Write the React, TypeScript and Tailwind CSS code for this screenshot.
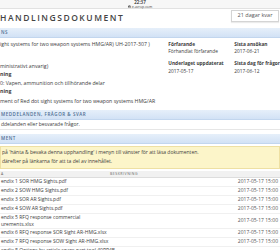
import { Lock } from 'lucide-react'

const files = [
  { name: ['endix 1 SOR HMG Sights.pdf'], date: '2017-05-17 15:00' },
  { name: ['endix 2 SOW HMG Sights.pdf'], date: '2017-05-17 15:00' },
  { name: ['endix 3 SOR AR Sights.pdf'], date: '2017-05-17 15:00' },
  { name: ['endix 4 SOW AR Sights.pdf'], date: '2017-05-17 15:00' },
  { name: ['endix 5 RFQ response commercial', 'urements.xlsx'], date: '2017-05-17 15:00' },
  { name: ['endix 6 RFQ response SOR Sight AR-HMG.xlsx'], date: '2017-05-17 15:00' },
  { name: ['endix 7 RFQ response SOW Sight AR-HMG.xlsx'], date: '2017-05-17 15:00' },
  { name: ['endix 8 Options by article spare part tool 40PP4B', '2495.xlsx'], date: '2017-05-17 15:00' },
]

function SectionBar({ label }: { label: string }) {
  return (
    <div className="h-[10px] flex items-center pl-[1px] bg-gradient-to-b from-[#e6effa] to-[#d2e2f5] border-b border-[#c2d6ee] text-[4.5px] font-semibold tracking-[0.12em] text-[#4d6d92]">
      {label}
    </div>
  )
}

export default function App() {
  return (
    <div className="w-[280px] h-[250px] overflow-hidden bg-white text-[#3c3c3c] font-['Open_Sans',sans-serif] text-[5px] leading-none">
      {/* Status bar */}
      <div className="h-[9px] bg-[#f7f7f7] flex flex-col items-center justify-center gap-[1px] border-b border-[#e2e2e2]">
        <span className="text-[4.5px] font-semibold text-[#222]">22:37</span>
        <span className="flex items-center gap-[1px] text-[3.5px] text-[#444]">
          <Lock className="w-[3px] h-[3px]" strokeWidth={4} />
          e-avrop.com
        </span>
      </div>

      {/* Title row */}
      <div className="flex items-start justify-between pt-[1px] pr-[1px]">
        <h1 className="mt-[4px] text-[8.5px] font-semibold tracking-[0.18em] text-[#444]">HANDLINGSDOKUMENT</h1>
        <div className="w-[48px] h-[12px] flex items-center justify-center border border-[#d4d4d4] bg-white shadow-[0_1px_1px_rgba(0,0,0,0.08)] text-[5.5px] text-[#555]">
          21 dagar kvar
        </div>
      </div>

      <div className="mt-[5px]">
        <SectionBar label="NS" />
      </div>

      {/* Details */}
      <div className="flex pt-[4px] pb-[6px]">
        <div className="w-[180px] flex flex-col gap-[3px] text-[5.2px]">
          <span>ight systems for two weapon systems HMG/AR) UH-2017-307 )</span>
          <span className="h-[5px]" />
          <span className="h-[3px]" />
          <span>ministrativt anvarig)</span>
          <span className="font-bold">ning</span>
          <span className="mt-[1px]">0: Vapen, ammunition och tillhörande delar</span>
          <span className="font-bold">ning</span>
          <span className="mt-[1px]">ment of Red dot sight systems for two weapon systems HMG/AR</span>
        </div>
        <div className="flex-1 grid grid-cols-[66px_1fr] gap-y-[3px] content-start text-[4.8px] whitespace-nowrap">
          <span className="font-bold">Förfarande</span>
          <span className="font-bold">Sista ansökan</span>
          <span>Förhandlat förfarande</span>
          <span>2017-06-21</span>
          <span className="font-bold mt-[4px]">Underlaget uppdaterat</span>
          <span className="font-bold mt-[4px]">Sista dag för frågor</span>
          <span>2017-05-17</span>
          <span>2017-06-12</span>
        </div>
      </div>

      <SectionBar label="MEDDELANDEN, FRÅGOR & SVAR" />
      <div className="h-[10px] flex items-center pl-[1px] bg-white border-b border-[#e6e6e6] text-[5px]">
        ddelanden eller besvarade frågor.
      </div>

      <div className="mt-[4px]">
        <SectionBar label="MENT" />
      </div>

      {/* Notice */}
      <div className="mt-[2px] h-[23px] flex flex-col justify-center gap-[4px] pl-[1px] bg-[#fcf5c9] border border-[#eee0a3] text-[5px]">
        <span>på 'hänta &amp; bevaka denna upphandling' i menyn till vänster för att läsa dokumenten.</span>
        <span>därefter på länkarna för att ta del av innehållet.</span>
      </div>

      {/* Documents table */}
      <div className="mt-[2px]">
        <div className="h-[7px] flex items-center bg-[#f1f1f1] border-b border-[#dddddd] text-[3.5px] tracking-[0.15em] text-[#666]">
          <span className="w-[110px] pl-[1px]">A</span>
          <span>BESKRIVNING</span>
        </div>
        {files.map((f) => (
          <div
            key={f.name[0]}
            className={`flex items-center justify-between pr-[2px] border-b border-[#f0f0f0] ${f.name.length > 1 ? 'h-[15px]' : 'h-[9px]'}`}
          >
            <div className="flex flex-col gap-[2px] pl-[1px]">
              {f.name.map((line) => (
                <span key={line}>{line}</span>
              ))}
            </div>
            <span className="text-[#555]">{f.date}</span>
          </div>
        ))}
      </div>
    </div>
  )
}
